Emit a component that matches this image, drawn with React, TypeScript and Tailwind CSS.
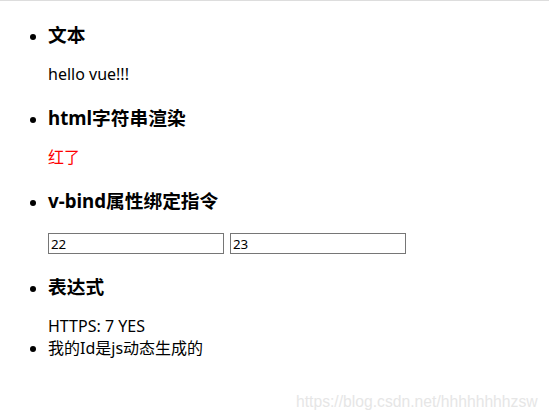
import React from "react";

const font = {
  fontFamily: '"Noto Sans", "Noto Sans CJK SC", sans-serif',
};

export default function App() {
  return (
    <div
      className="relative w-[549px] h-[420px] bg-white text-black border-t border-[#dddddd] overflow-hidden"
      style={font}
    >
      <ul className="list-disc ml-2 pl-10 pt-[22px]">
        <li>
          <h3 className="text-[18.72px] font-bold leading-[24px]">文本</h3>
          <p className="text-base leading-[21px] mt-[17px]">hello vue!!!</p>
        </li>
        <li className="mt-[21px]">
          <h3 className="text-[18.72px] font-bold leading-[24px]">html字符串渲染</h3>
          <p className="text-base leading-[21px] mt-[17px] text-[#ff0000]">红了</p>
        </li>
        <li className="mt-[21px]">
          <h3 className="text-[18.72px] font-bold leading-[24px]">v-bind属性绑定指令</h3>
          <div className="flex gap-[6px] mt-[20px]">
            <input
              defaultValue="22"
              className="w-[176px] h-[21px] border border-[#767676] px-[2px] text-[13.33px] leading-[19px] outline-none"
              style={font}
            />
            <input
              defaultValue="23"
              className="w-[176px] h-[21px] border border-[#767676] px-[2px] text-[13.33px] leading-[19px] outline-none"
              style={font}
            />
          </div>
        </li>
        <li className="mt-[21px]">
          <h3 className="text-[18.72px] font-bold leading-[24px]">表达式</h3>
          <p className="text-base leading-[21px] mt-[17px]">HTTPS: 7 YES</p>
        </li>
        <li className="text-base leading-[21px] mt-[1px]">我的Id是js动态生成的</li>
      </ul>
      <div
        className="absolute left-[296px] top-[391px] text-[15.7px] leading-[20px] text-[#e6e6e6] whitespace-nowrap"
        style={{ fontFamily: '"Liberation Sans", Arial, sans-serif' }}
      >
        https://blog.csdn.net/hhhhhhhhzsw
      </div>
    </div>
  );
}
